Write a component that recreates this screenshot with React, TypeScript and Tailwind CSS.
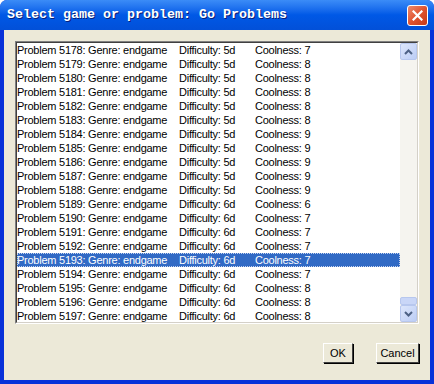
import type { ReactNode } from "react";

const rows = [
  { id: 5178, diff: "5d", cool: 7 },
  { id: 5179, diff: "5d", cool: 8 },
  { id: 5180, diff: "5d", cool: 8 },
  { id: 5181, diff: "5d", cool: 8 },
  { id: 5182, diff: "5d", cool: 8 },
  { id: 5183, diff: "5d", cool: 8 },
  { id: 5184, diff: "5d", cool: 9 },
  { id: 5185, diff: "5d", cool: 9 },
  { id: 5186, diff: "5d", cool: 9 },
  { id: 5187, diff: "5d", cool: 9 },
  { id: 5188, diff: "5d", cool: 9 },
  { id: 5189, diff: "6d", cool: 6 },
  { id: 5190, diff: "6d", cool: 7 },
  { id: 5191, diff: "6d", cool: 7 },
  { id: 5192, diff: "6d", cool: 7 },
  { id: 5193, diff: "6d", cool: 7 },
  { id: 5194, diff: "6d", cool: 7 },
  { id: 5195, diff: "6d", cool: 8 },
  { id: 5196, diff: "6d", cool: 8 },
  { id: 5197, diff: "6d", cool: 8 },
];

const selectedId = 5193;

function Chevron({ up }: { up?: boolean }) {
  return (
    <svg width="9" height="6" viewBox="0 0 9 6">
      <path
        d={up ? "M1 5 L4.5 1.5 L8 5" : "M1 1 L4.5 4.5 L8 1"}
        fill="none"
        stroke="#4d6185"
        strokeWidth="2"
      />
    </svg>
  );
}

function ScrollButton({ children }: { children: ReactNode }) {
  return (
    <div className="flex h-[17px] w-[17px] items-center justify-center rounded-[2px] border border-[#b7c7ee] bg-gradient-to-br from-[#dde6fb] to-[#bccdf5]">
      {children}
    </div>
  );
}

function Button({ label, className }: { label: string; className: string }) {
  return (
    <button
      className={`flex h-[20px] items-center justify-center border border-t-white border-l-white border-r-[#404040] border-b-[#404040] bg-[#ece9d8] text-[11px] text-black shadow-[1px_1px_0_#000] ${className}`}
    >
      {label}
    </button>
  );
}

export default function App() {
  return (
    <div className="flex h-[384px] w-[434px] flex-col overflow-hidden rounded-t-[7px] bg-[#0831d9] font-['Liberation_Sans',Arial,sans-serif]">
      <div className="flex h-[30px] shrink-0 items-center justify-between bg-gradient-to-b from-[#3b8cf7] via-[#0058e6] to-[#0250d8] pl-[7px] pr-[6px]">
        <span className="font-['Liberation_Mono','DejaVu_Sans_Mono',monospace] text-[13.33px] font-bold text-white [text-shadow:1px_1px_0_#0a1f7a]">
          Select game or problem: Go Problems
        </span>
        <div className="flex h-[21px] w-[21px] items-center justify-center rounded-[3px] border border-white bg-gradient-to-br from-[#ec8a6c] via-[#e1532f] to-[#c63914]">
          <svg width="11" height="11" viewBox="0 0 11 11">
            <path d="M1.5 1.5 L9.5 9.5 M9.5 1.5 L1.5 9.5" stroke="white" strokeWidth="2.2" strokeLinecap="square" />
          </svg>
        </div>
      </div>
      <div className="mx-[4px] mb-[4px] flex flex-1 flex-col bg-[#ece9d8] pl-[11px] pr-[11px] pt-[11px]">
        <div className="flex h-[283px] w-[404px] border border-t-[#808080] border-l-[#808080] border-r-white border-b-white">
          <div className="flex flex-1 border border-t-[#404040] border-l-[#404040] border-r-[#d4d0c8] border-b-[#d4d0c8] bg-white">
            <div className="flex flex-1 flex-col">
              {rows.map((r) => {
                const sel = r.id === selectedId;
                return (
                  <div
                    key={r.id}
                    className={`flex h-[14px] items-center whitespace-nowrap text-[11px] leading-[14px] tracking-[-0.25px] ${
                      sel ? "bg-[#316ac5] text-white outline-1 -outline-offset-1 outline-dotted outline-[#c6d3ee]" : "text-black"
                    }`}
                  >
                    <span className="w-[162px]">{`Problem ${r.id}: Genre: endgame`}</span>
                    <span className="w-[76px]">{`Difficulty: ${r.diff}`}</span>
                    <span>{`Coolness: ${r.cool}`}</span>
                  </div>
                );
              })}
            </div>
            <div className="flex w-[17px] flex-col bg-[#f5f4ef]">
              <ScrollButton>
                <Chevron up />
              </ScrollButton>
              <div className="flex-1" />
              <div className="h-[8px] w-[17px] rounded-[2px] border border-[#b7c7ee] bg-[#c9d6f7]" />
              <ScrollButton>
                <Chevron />
              </ScrollButton>
            </div>
          </div>
        </div>
        <div className="mt-[19px] flex justify-end gap-[23px]">
          <Button label="OK" className="w-[30px]" />
          <Button label="Cancel" className="w-[43px]" />
        </div>
      </div>
    </div>
  );
}
